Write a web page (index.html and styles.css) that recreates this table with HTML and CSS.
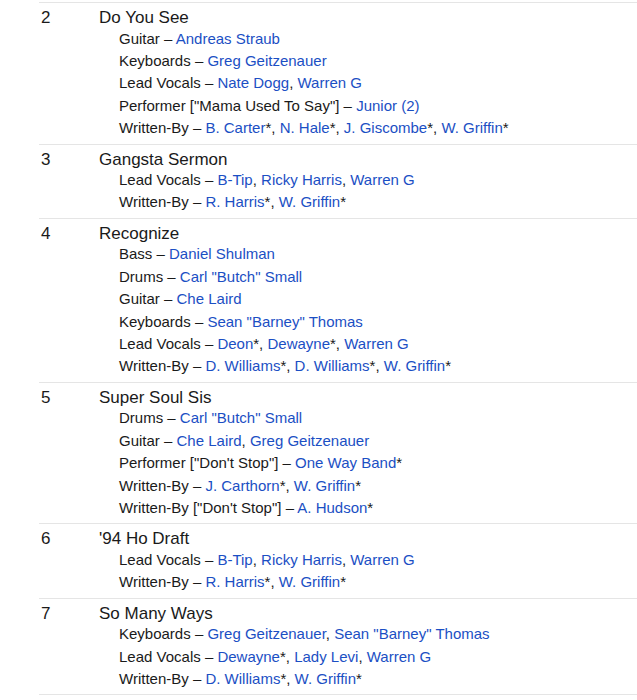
FILE: index.html
```html
<!DOCTYPE html>
<html>
<head>
<meta charset="utf-8">
<link rel="stylesheet" href="styles.css">
</head>
<body>
<div class="tracklist">
  <div class="track">
    <div class="pos">2</div>
    <div class="body">
      <div class="title">Do You See</div>
      <div class="credit">Guitar – <a>Andreas Straub</a></div>
      <div class="credit">Keyboards – <a>Greg Geitzenauer</a></div>
      <div class="credit">Lead Vocals – <a>Nate Dogg</a>, <a>Warren G</a></div>
      <div class="credit">Performer ["Mama Used To Say"] – <a>Junior (2)</a></div>
      <div class="credit">Written-By – <a>B. Carter</a>*, <a>N. Hale</a>*, <a>J. Giscombe</a>*, <a>W. Griffin</a>*</div>
    </div>
  </div>
  <div class="track">
    <div class="pos">3</div>
    <div class="body">
      <div class="title">Gangsta Sermon</div>
      <div class="credit">Lead Vocals – <a>B-Tip</a>, <a>Ricky Harris</a>, <a>Warren G</a></div>
      <div class="credit">Written-By – <a>R. Harris</a>*, <a>W. Griffin</a>*</div>
    </div>
  </div>
  <div class="track">
    <div class="pos">4</div>
    <div class="body">
      <div class="title">Recognize</div>
      <div class="credit">Bass – <a>Daniel Shulman</a></div>
      <div class="credit">Drums – <a>Carl "Butch" Small</a></div>
      <div class="credit">Guitar – <a>Che Laird</a></div>
      <div class="credit">Keyboards – <a>Sean "Barney" Thomas</a></div>
      <div class="credit">Lead Vocals – <a>Deon</a>*, <a>Dewayne</a>*, <a>Warren G</a></div>
      <div class="credit">Written-By – <a>D. Williams</a>*, <a>D. Williams</a>*, <a>W. Griffin</a>*</div>
    </div>
  </div>
  <div class="track">
    <div class="pos">5</div>
    <div class="body">
      <div class="title">Super Soul Sis</div>
      <div class="credit">Drums – <a>Carl "Butch" Small</a></div>
      <div class="credit">Guitar – <a>Che Laird</a>, <a>Greg Geitzenauer</a></div>
      <div class="credit">Performer ["Don't Stop"] – <a>One Way Band</a>*</div>
      <div class="credit">Written-By – <a>J. Carthorn</a>*, <a>W. Griffin</a>*</div>
      <div class="credit">Written-By ["Don't Stop"] – <a>A. Hudson</a>*</div>
    </div>
  </div>
  <div class="track">
    <div class="pos">6</div>
    <div class="body">
      <div class="title">'94 Ho Draft</div>
      <div class="credit">Lead Vocals – <a>B-Tip</a>, <a>Ricky Harris</a>, <a>Warren G</a></div>
      <div class="credit">Written-By – <a>R. Harris</a>*, <a>W. Griffin</a>*</div>
    </div>
  </div>
  <div class="track">
    <div class="pos">7</div>
    <div class="body">
      <div class="title">So Many Ways</div>
      <div class="credit">Keyboards – <a>Greg Geitzenauer</a>, <a>Sean "Barney" Thomas</a></div>
      <div class="credit">Lead Vocals – <a>Dewayne</a>*, <a>Lady Levi</a>, <a>Warren G</a></div>
      <div class="credit">Written-By – <a>D. Williams</a>*, <a>W. Griffin</a>*</div>
    </div>
  </div>
</div>
</body>
</html>
```
FILE: styles.css
```css
html, body {
  margin: 0;
  padding: 0;
  background: #ffffff;
}
body {
  font-family: "Liberation Sans", Arial, sans-serif;
  color: #1a1a1a;
  padding: 2px 0 0 39px;
}
.tracklist {
  border-bottom: 1px solid #e5e5e5;
}
.track {
  display: flex;
  border-top: 1px solid #e5e5e5;
  padding: 5px 0 4px 0;
}
.pos {
  width: 58px;
  padding-left: 2px;
  font-size: 17px;
  line-height: 19.5px;
}
.body {
  flex: 1;
}
.title {
  font-size: 17px;
  line-height: 19.5px;
}
.credit {
  font-size: 15px;
  line-height: 22.4px;
  padding-left: 20px;
  white-space: nowrap;
}
.credit a {
  color: #1b4fc4;
  text-decoration: none;
}
```
